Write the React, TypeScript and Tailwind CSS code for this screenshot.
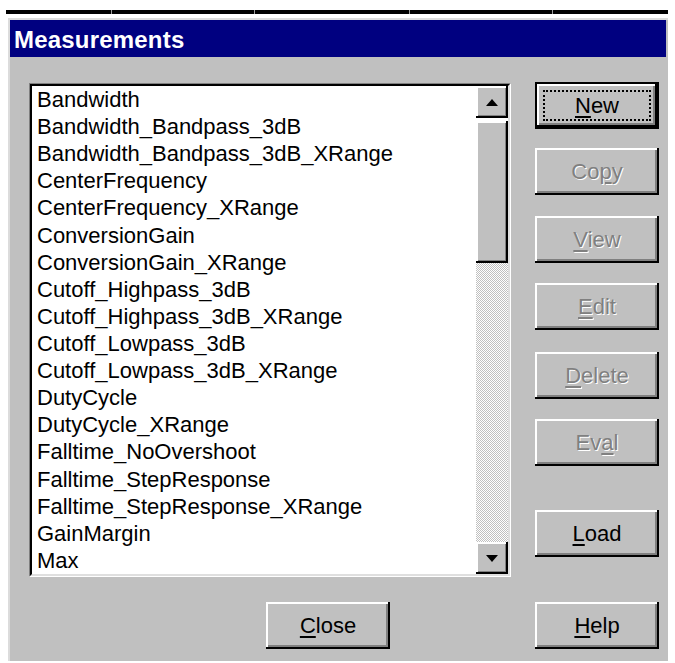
import type { ReactNode } from "react"

const items = [
  "Bandwidth",
  "Bandwidth_Bandpass_3dB",
  "Bandwidth_Bandpass_3dB_XRange",
  "CenterFrequency",
  "CenterFrequency_XRange",
  "ConversionGain",
  "ConversionGain_XRange",
  "Cutoff_Highpass_3dB",
  "Cutoff_Highpass_3dB_XRange",
  "Cutoff_Lowpass_3dB",
  "Cutoff_Lowpass_3dB_XRange",
  "DutyCycle",
  "DutyCycle_XRange",
  "Falltime_NoOvershoot",
  "Falltime_StepResponse",
  "Falltime_StepResponse_XRange",
  "GainMargin",
  "Max",
]

function Btn({
  children,
  disabled,
  isDefault,
  className = "",
}: {
  children: ReactNode
  disabled?: boolean
  isDefault?: boolean
  className?: string
}) {
  const face = (
    <div className="relative flex h-full w-full items-center justify-center bg-[#c0c0c0] shadow-[inset_-2px_-2px_#000,inset_2px_2px_#fff,inset_-4px_-4px_#808080]">
      {isDefault && <div className="pointer-events-none absolute inset-[6px] border-2 border-dotted border-black" />}
      <span
        className={
          disabled
            ? "text-[22px] leading-none text-[#808080] [text-shadow:1px_1px_0_#fff]"
            : "text-[22px] leading-none text-black"
        }
      >
        {children}
      </span>
    </div>
  )
  if (isDefault) {
    return <div className={`h-[47px] w-[124px] border-2 border-black ${className}`}>{face}</div>
  }
  return <div className={`h-[47px] w-[124px] ${className}`}>{face}</div>
}

function Arrow({ up }: { up?: boolean }) {
  return (
    <div className="flex h-[32px] w-[32px] items-center justify-center bg-[#c0c0c0] shadow-[inset_-2px_-2px_#000,inset_2px_2px_#fff,inset_-3px_-3px_#808080]">
      <svg width="12" height="7" viewBox="0 0 12 7">
        {up ? <polygon points="6,0 12,7 0,7" fill="#000" /> : <polygon points="0,0 12,0 6,7" fill="#000" />}
      </svg>
    </div>
  )
}

export default function App() {
  return (
    <div className="relative h-[663px] w-[675px] overflow-hidden bg-white font-['Liberation_Sans',Arial,sans-serif]">
      {/* top strip of the window behind */}
      <div className="ml-[6px] mt-[10px] flex h-[4px] w-[662px] gap-[1px] bg-[#9a9a9a]">
        <div className="w-[105px] bg-black" />
        <div className="w-[142px] bg-black" />
        <div className="w-[154px] bg-black" />
        <div className="w-[142px] bg-black" />
        <div className="flex-1 bg-black" />
      </div>

      {/* dialog */}
      <div className="ml-[8px] mt-[4px] h-[643px] w-[660px] border-l-2 border-t-2 border-[#dcdcdc] bg-[#c0c0c0] pr-[2px]">
        <div className="flex h-[37px] items-center bg-[#000080] pl-[4px] pt-[2px]">
          <span className="text-[24px] font-bold leading-none tracking-[0.2px] text-white">Measurements</span>
        </div>

        <div className="flex pl-[19px] pt-[25px]">
          {/* left column */}
          <div className="flex flex-col">
            <div className="mt-[1px] h-[494px] w-[482px] border border-b-white border-l-[#808080] border-r-white border-t-[#808080]">
              <div className="flex h-full w-full border-2 border-b-[#dfdfdf] border-l-black border-r-[#dfdfdf] border-t-black bg-white">
                <div className="flex-1 overflow-hidden pl-[5px]">
                  {items.map((it) => (
                    <div key={it} className="h-[27.12px] whitespace-nowrap text-[22px] leading-[27px] text-black">
                      {it}
                    </div>
                  ))}
                </div>
                <div className="flex w-[32px] flex-col">
                  <Arrow up />
                  <div className="mt-[3px] h-[142px] w-[32px] bg-[#c0c0c0] shadow-[inset_-2px_-2px_#000,inset_2px_2px_#fff,inset_-3px_-3px_#808080]" />
                  <div className="flex-1 bg-[image:repeating-conic-gradient(#c0c0c0_0_25%,#ffffff_0_50%)] bg-size-[2px_2px]" />
                  <Arrow />
                </div>
              </div>
            </div>
            <Btn className="ml-[237px] mt-[25px]">
              <span className="underline underline-offset-[3px]">C</span>lose
            </Btn>
          </div>

          {/* right column */}
          <div className="ml-[24px] flex flex-col">
            <Btn isDefault>
              <span className="underline underline-offset-[3px]">N</span>ew
            </Btn>
            <Btn disabled className="mt-[19px]">
              Co<span className="underline underline-offset-[3px]">p</span>y
            </Btn>
            <Btn disabled className="mt-[21px]">
              <span className="underline underline-offset-[3px]">V</span>iew
            </Btn>
            <Btn disabled className="mt-[20px]">
              <span className="underline underline-offset-[3px]">E</span>dit
            </Btn>
            <Btn disabled className="mt-[22px]">
              <span className="underline underline-offset-[3px]">D</span>elete
            </Btn>
            <Btn disabled className="mt-[20px]">
              Ev<span className="underline underline-offset-[3px]">a</span>l
            </Btn>
            <Btn className="mt-[44px]">
              <span className="underline underline-offset-[3px]">L</span>oad
            </Btn>
            <Btn className="mt-[45px]">
              <span className="underline underline-offset-[3px]">H</span>elp
            </Btn>
          </div>
        </div>
      </div>
    </div>
  )
}
